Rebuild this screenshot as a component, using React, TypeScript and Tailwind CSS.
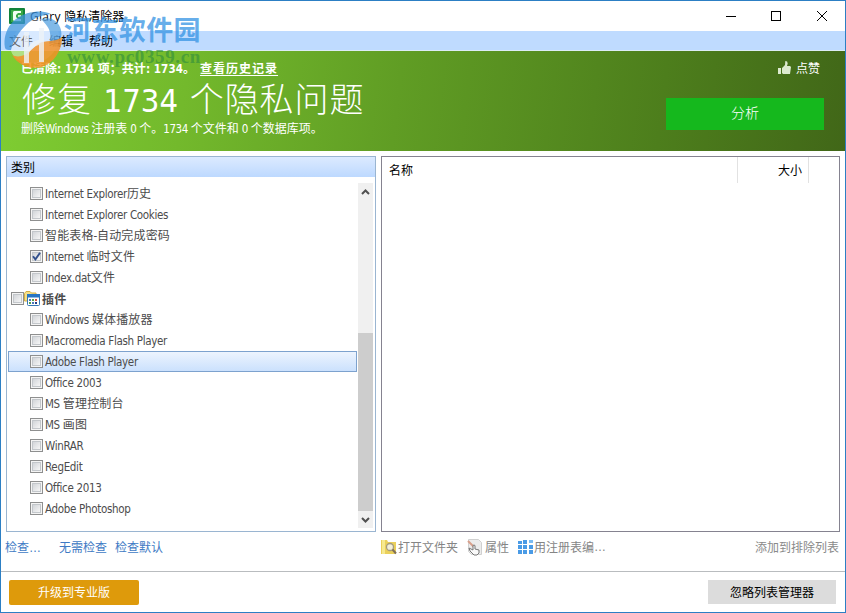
import { Fragment } from "react";
import { clsx } from "clsx";

const items = [
  { label: "Internet Explorer历史" },
  { label: "Internet Explorer Cookies" },
  { label: "智能表格-自动完成密码" },
  { label: "Internet 临时文件", checked: true },
  { label: "Index.dat文件" },
  { label: "插件", group: true },
  { label: "Windows 媒体播放器" },
  { label: "Macromedia Flash Player" },
  { label: "Adobe Flash Player", selected: true },
  { label: "Office 2003" },
  { label: "MS 管理控制台" },
  { label: "MS 画图" },
  { label: "WinRAR" },
  { label: "RegEdit" },
  { label: "Office 2013" },
  { label: "Adobe Photoshop" },
];

// Latin runs are set smaller than the Chinese ones
function Mixed({ text, latin }: { text: string; latin: string }) {
  return (
    <>
      {text.split(/([\x20-\x7e]+)/).map((part, i) =>
        i % 2 ? (
          <span key={i} className={latin}>
            {part}
          </span>
        ) : (
          <Fragment key={i}>{part}</Fragment>
        )
      )}
    </>
  );
}

function Checkbox({ checked }: { checked?: boolean }) {
  return (
    <span className="flex size-[13px] shrink-0 border border-[#8e8f8f] bg-[#f4f4f4] p-px">
      <span className="flex size-[9px] border border-[#c3c7cb] bg-linear-to-br from-[#d2d5d9] to-[#f6f6f6]">
        {checked && (
          <svg viewBox="0 0 9 9" className="-ml-px -mt-px size-[9px] shrink-0 overflow-visible">
            <path d="M1 4.2 3.4 7.4 8 .8" fill="none" stroke="#32508c" strokeWidth="1.9" />
          </svg>
        )}
      </span>
    </span>
  );
}

function PluginIcon() {
  return (
    <svg width="16" height="16" viewBox="0 0 16 16" className="shrink-0">
      <path d="M.5 10V2.5L2 .5h4L7.5 2H12v8z" fill="#f5df86" stroke="#d3ae45" />
      <rect x="3.5" y="3.5" width="12" height="11" rx="1" fill="#fff" stroke="#3577b5" />
      <path d="M3 3h13v3.500H3z" fill="#2876c4" />
      <path d="M5 8h2v2H5zM8 11h2v2H8z" fill="#4b78bb" />
      <path d="M8 8h2v2H8zM5 11h2v2H5z" fill="#55a34a" />
      <path d="M11 8h2v2h-2z" fill="#d1523f" />
      <path d="M11 11h2v2h-2z" fill="#243f89" />
    </svg>
  );
}

function Watermark() {
  return (
    <div className="pointer-events-none absolute -left-px -top-px h-[80px] w-[210px]">
      <svg width="70" height="80" viewBox="0 0 70 80" className="absolute left-0 top-0">
        <path
          d="M11 51C9 36 21 22 37 19c13-2 21 6 22 16 1 14-11 27-25 28-11 1-20-3-23-12z"
          fill="#fff"
          opacity=".4"
        />
        <path
          d="M5 48C2 29 15 14 34 12c7-1 13 0 17 2-9 1-18 4-25 11-7 7-13 16-15 25-3 0-5 0-6-2z"
          fill="#3c93dc"
          opacity=".75"
        />
        <path
          d="M41 19c10-3 18 2 20 11 1 5 0 8-2 11-4 2-7 2-10 3 2-6 2-13-2-18-2-3-4-5-6-7z"
          fill="#3c93dc"
          opacity=".65"
        />
        <path
          d="M12 55c6 3 13 1 18-4l8-7c8-5 17-1 24-7 0 15-9 26-20 30-12 3-24-2-30-12z"
          fill="#f29127"
          opacity=".85"
        />
        <path
          d="M24 32h5v14c3-4 7-6 10-6V28h5v34h-5V45c-5 1-8 4-10 8v10h-5z"
          fill="#eef2f8"
          opacity=".8"
        />
      </svg>
      <span className="absolute left-[64px] top-[12px] whitespace-nowrap font-['Noto_Sans_CJK_SC',sans-serif] text-[27px] font-bold leading-[34px] tracking-[0.4px] text-[#3593e3]/75">
        河东软件园
      </span>
      <span className="absolute left-[67px] top-[47px] whitespace-nowrap font-['Liberation_Serif','Noto_Sans_CJK_SC',serif] text-[19px] font-bold leading-[20px] tracking-[0.65px] text-[#328f3d]/65">
        www.pc0359.cn
      </span>
    </div>
  );
}

function TitleBar() {
  return (
    <div className="flex h-[30px] shrink-0 items-center bg-white pl-2 text-black">
      <svg width="16" height="16" viewBox="0 0 16 16" className="shrink-0">
        <rect width="16" height="16" rx="1" fill="#11833a" />
        <path d="M2 2h12v12H2z" fill="#39a846" />
        <path d="M5 3h7v2H9L7 7v2l2 2h3v2H5l-1-1V4z" fill="#f2fff1" />
        <path d="M9 7h3v2H9z" fill="#c7edc4" />
      </svg>
      <span className="ml-[5px] whitespace-nowrap text-[12px]">
        <Mixed text="Glary 隐私清除器" latin="font-['Open_Sans'] text-[12px] tracking-[0.3px]" />
      </span>
      <svg width="110" height="14" viewBox="0 0 110 14" className="ml-auto mr-[14px]" shapeRendering="crispEdges">
        <path d="M5 7.500h10M50.500 2.500h9v9h-9z" fill="none" stroke="#000" />
        <path d="M96 2l10 10M106 2 96 12" fill="none" stroke="#000" shapeRendering="auto" />
      </svg>
    </div>
  );
}

function Banner() {
  return (
    <div className="flex h-[100px] shrink-0 justify-between bg-[linear-gradient(97deg,#7fcd32_0%,#73b92c_22%,#609d24_47%,#4d7e1c_78%,#416718_100%)] pl-[20px] pr-[21px] text-white">
      <div className="whitespace-nowrap">
        <div className="mt-[9px] h-4 text-[12px] font-bold leading-4">
          <Mixed
            text="已清除: 1734 项；共计: 1734。"
            latin="font-['DejaVu_Sans_Condensed','DejaVu_Sans'] text-[11.5px] tracking-[0.1px]"
          />
          <span className="ml-[5px] underline underline-offset-2 tracking-[1px]">查看历史记录</span>
        </div>
        <div className="mt-[1px] h-[42px] pl-px text-[34px] font-light leading-[42px] tracking-[0.9px]">
          <Mixed
            text="修复 1734 个隐私问题"
            latin="font-['DejaVu_Sans_Condensed','DejaVu_Sans'] text-[32.5px] font-normal tracking-[0px] [word-spacing:2.5px]"
          />
        </div>
        <div className="h-[18px] text-[12px] leading-[18px]">
          <Mixed
            text="删除Windows 注册表 0 个。1734 个文件和 0 个数据库项。"
            latin="font-['DejaVu_Sans_Condensed','DejaVu_Sans'] text-[11.5px] tracking-[-0.4px]"
          />
        </div>
      </div>
      <div className="flex flex-col items-end">
        <div className="mr-1 mt-[8px] flex h-[18px] items-center gap-[5px] text-[12px]">
          <svg width="13" height="14" viewBox="0 0 13 14" fill="#dceacf">
            <path d="M0 7h3v6H0zM4 12V7l3-3 .3-4 1.800.5.6 2L9 5h3l1 1-1 7H5z" />
          </svg>
          点赞
        </div>
        <button className="mt-[21px] h-[32px] w-[158px] bg-[#15b81d] pb-[3px] text-[14px] font-light">
          分析
        </button>
      </div>
    </div>
  );
}

function CategoryPanel() {
  return (
    <div className="flex w-[370px] flex-col border border-[#9ab5d1] bg-white">
      <div className="flex h-[20px] items-center bg-linear-to-b from-[#dceaff] to-[#bdd9ff] pl-[4px] text-[12px] text-black">
        类别
      </div>
      <div className="flex flex-1 pl-px pt-[6px]">
        <div className="w-[349px]">
          {items.map((item) => (
            <div
              key={item.label}
              className={clsx(
                "flex h-[21px] items-center whitespace-nowrap border text-[12px] text-[#4c4c4c]",
                item.group ? "pl-[2px] font-bold" : "pl-[21px]",
                item.selected
                  ? "border-[#7da2ce] bg-linear-to-b from-[#edf4fe] to-[#cbe1fd]"
                  : "border-transparent"
              )}
            >
              <Checkbox checked={item.checked} />
              {item.group && <PluginIcon />}
              <span className="ml-[2px] pt-px tracking-[0.15px]">
                <Mixed
                  text={item.label}
                  latin="font-['DejaVu_Sans_Condensed','DejaVu_Sans'] text-[11.5px] tracking-[-0.32px]"
                />
              </span>
            </div>
          ))}
        </div>
        <div className="ml-px flex h-[345px] w-[15px] flex-col items-center bg-[#f0f0f0]">
          <svg width="9" height="6" viewBox="0 0 9 6" className="mt-[6px]">
            <path d="M1 5l3.500-3.500L8 5" fill="none" stroke="#505050" strokeWidth="2" />
          </svg>
          <div className="mt-[138px] h-[178px] w-full bg-[#cdcdcd]" />
          <svg width="9" height="6" viewBox="0 0 9 6" className="mt-[6px]">
            <path d="M1 1l3.500 3.500L8 1" fill="none" stroke="#505050" strokeWidth="2" />
          </svg>
        </div>
      </div>
    </div>
  );
}

function DetailPanel() {
  return (
    <div className="ml-[5px] w-[459px] border border-[#858390] bg-white">
      <div className="flex h-[26px] items-center text-[12px] text-black">
        <span className="w-[355px] pl-[7px]">名称</span>
        <span className="flex h-full w-[72px] items-center justify-end border-x border-[#e2e2e2] pr-[6px]">
          大小
        </span>
      </div>
    </div>
  );
}

function ActionLinks() {
  return (
    <div className="flex h-[30px] items-center whitespace-nowrap pl-[4px] pr-[6px] text-[12px] text-[#3e7ac4]">
      <span className="w-[54px]">
        检查<span className="font-['Liberation_Sans']">…</span>
      </span>
      <span className="w-[56px]">无需检查</span>
      <span className="w-[266px]">检查默认</span>
      <div className="flex items-center text-[#858585]">
        <svg width="16" height="16" viewBox="0 0 16 16" className="mr-px">
          <path d="M0 1h6l1 2h8v12H0z" fill="#ead05b" />
          <path d="M1 1h3v14H1z" fill="#f7e98f" />
          <circle cx="9" cy="8" r="3.5" fill="#f2efda" stroke="#a49b7e" strokeWidth="1.3" />
          <path d="m11.500 10.500 3.500 4" stroke="#80715a" strokeWidth="2" />
        </svg>
        打开文件夹
        <svg width="16" height="17" viewBox="0 0 16 17" className="ml-[9px] mr-[2px]">
          <path d="M1.500.5h10l3 3v12h-10l-3-3z" fill="#ececec" stroke="#d0d0d0" />
          <path d="m1 2 6 6" stroke="#d8a08c" strokeWidth="2" />
          <path d="m2 9 4 2V6.500q1-1 2 0V10l4 1v3l-2 2H7l-4-4z" fill="#fafafa" stroke="#777" />
        </svg>
        属性
        <svg width="17" height="16" viewBox="0 0 17 16" className="ml-[8px]" fill="#4a9be6">
          <path d="M1 2h4v3H1zM6 1h4v4H6zM1 6h4v4H1zM6 6h4v4H6zM12 6h4v4h-4zM1 11h4v4H1zM6 11h4v4H6zM12 11h4v4h-4z" />
          <path d="M12 1h4v3h-4z" fill="#7bbcf2" />
        </svg>
        用注册表编<span className="font-['Liberation_Sans']">…</span>
      </div>
      <span className="ml-auto text-[#8a8a8a]">添加到排除列表</span>
    </div>
  );
}

export default function App() {
  return (
    <div className="relative flex h-[613px] w-[846px] flex-col overflow-hidden border border-[#2c7fc4] bg-white font-['Noto_Sans_CJK_SC',sans-serif]">
      <TitleBar />
      <div className="flex h-[20px] shrink-0 items-center gap-[16px] border-b border-[#dcecf5] bg-[#bfdbff] pl-[8px] text-[12px] text-black">
        <span>文件</span>
        <span>编辑</span>
        <span>帮助</span>
      </div>
      <Banner />
      <div className="flex h-[381px] shrink-0 pl-[5px] pt-[5px]">
        <CategoryPanel />
        <DetailPanel />
      </div>
      <ActionLinks />
      <div className="mt-[9px] flex h-[41px] items-center justify-between border-t border-[#b9bcbf] pl-[8px] pr-[9px] text-[12px]">
        <button className="h-[25px] w-[130px] rounded-xs bg-[#de9a0b] text-white">升级到专业版</button>
        <button className="h-[24px] w-[128px] bg-[#dcdcdc] text-black">忽略列表管理器</button>
      </div>
      <Watermark />
    </div>
  );
}
